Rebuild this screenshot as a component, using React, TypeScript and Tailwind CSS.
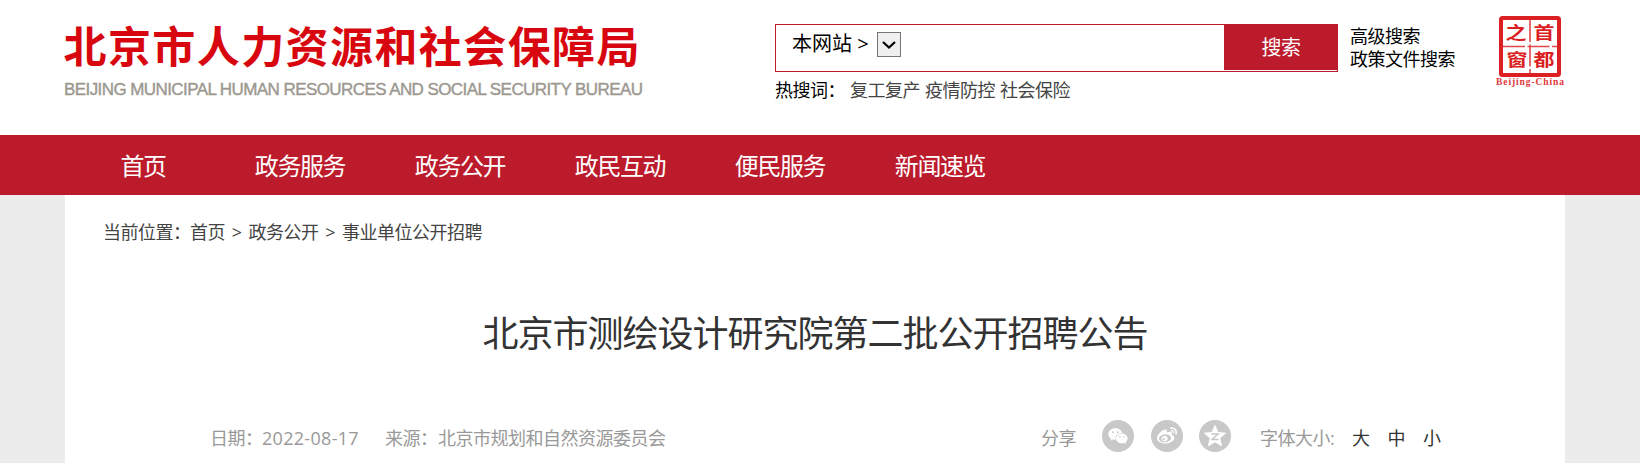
import React from "react";
import { FaWeibo } from "react-icons/fa";
import { AiFillWechat } from "react-icons/ai";

const navItems = ["政务服务", "政务公开", "政民互动", "便民服务", "新闻速览"];
const hotWords = ["复工复产", "疫情防控", "社会保险"];

const Logo = () => {
    return <svg width="590" height="100" viewBox="0 0 590 100" className="block overflow-visible">
        <text
            x="-1.5"
            y="55"
            textLength="576"
            lengthAdjust="spacing"
            fontSize="43"
            fontWeight="700"
            fill="#d8070f"
            fontFamily="'Noto Sans CJK SC', sans-serif"
        >
            北京市人力资源和社会保障局
        </text>
        <text
            x="-1"
            y="87"
            textLength="579"
            lengthAdjust="spacing"
            fontSize="17"
            fill="#9c9890"
            stroke="#9c9890"
            strokeWidth="0.4"
            fontFamily="'Liberation Sans', sans-serif"
        >
            BEIJING MUNICIPAL HUMAN RESOURCES AND SOCIAL SECURITY BUREAU
        </text>
    </svg>;
};

const CapitalSeal = () => {
    return <svg width="72" height="76" viewBox="0 0 72 76" className="block overflow-visible">
        <rect x="5" y="2" width="58" height="57" rx="1.5" fill="none" stroke="#dc1f22" strokeWidth="4" />
        <path d="M34 4v53M7 30.5h54" stroke="#e0494b" strokeWidth="1.6" strokeDasharray="22 2.5" />
        <g
            fill="#dc1f22"
            fontFamily="'Noto Sans CJK SC', sans-serif"
            fontWeight="700"
            fontSize="21"
            transform="scale(1 0.8)"
        >
            <text x="9.5" y="28.500">之</text>
            <text x="37.5" y="28.500">首</text>
            <text x="10.5" y="62.500">窗</text>
            <text x="37.5" y="62.500">都</text>
        </g>
        <text
            x="0"
            y="69"
            textLength="68"
            fontSize="9.5"
            fontWeight="700"
            fill="#e0383b"
            fontFamily="'Liberation Serif', serif"
        >
            Beijing-China
        </text>
    </svg>;
};

const SearchBox = () => {
    return <div className="w-[563px]">
        <div className="flex h-12 border border-[#bc1b2c]">
            <div className="flex flex-1 items-start pl-4 pt-2">
                <span className="w-[85px] whitespace-pre text-[20px] leading-[21px]">本网站 &gt;</span>
                <span className="mt-[-1px] flex h-[25px] w-6 items-center justify-center border border-[#767676] bg-[#efefef]">
                    <svg width="16" height="12" viewBox="0 0 16 12" fill="none" stroke="#000" strokeWidth="2.2">
                        <path d="M2 3l6 5.5L14 3" />
                    </svg>
                </span>
            </div>
            <div className="flex h-[45px] w-[113px] items-center justify-center bg-[#bc1b2c] pl-px pt-px text-[20px] tracking-[-0.5px] text-white">
                搜索
            </div>
        </div>
        <div className="mt-1.5 flex whitespace-nowrap text-[18px] leading-6 tracking-[-0.5px]">
            <span className="w-[75px]">热搜词：</span>
            <div className="flex gap-[5px] text-[#444]">
                {hotWords.map((word) => <a key={word}>{word}</a>)}
            </div>
        </div>
    </div>;
};

const ShareIcon = ({ children }: { children: React.ReactNode }) => {
    return <span className="flex size-8 items-center justify-center rounded-full bg-[#c8c8c8] text-white">
        {children}
    </span>;
};

const App = () => {
    return <div className="h-[463px] w-[1640px] overflow-hidden bg-[#ececec] font-['Open_Sans','Noto_Sans_CJK_SC',sans-serif] text-black">
        <header className="flex h-[135px] bg-white pl-[65px]">
            <div className="w-[710px] pt-2">
                <Logo />
            </div>
            <div className="pt-6">
                <SearchBox />
            </div>
            <div className="w-[158px] pl-3 pt-[25px] text-[18px] leading-[23px] tracking-[-0.5px]">
                <div>高级搜索</div>
                <div>政策文件搜索</div>
            </div>
            <div className="pt-4">
                <CapitalSeal />
            </div>
        </header>

        <nav className="flex h-[60px] items-center bg-[#bc1b2c] pl-[63px] text-[24px] tracking-[-1.4px] text-white">
            <a className="w-[157px] pl-[3px] pt-px text-center">首页</a>
            {navItems.map((item) => <a key={item} className="w-40 pt-px text-center">{item}</a>)}
        </nav>

        <main className="ml-[65px] h-[268px] w-[1500px] bg-white">
            <div className="flex whitespace-nowrap pl-[38px] pt-[25px] text-[18px] leading-6 tracking-[-0.5px] text-[#444]">
                <span className="w-[87px]">当前位置：</span>
                <span>首页</span>
                <span className="w-[23.5px] text-center">&gt;</span>
                <span>政务公开</span>
                <span className="w-[23.5px] text-center">&gt;</span>
                <span>事业单位公开招聘</span>
            </div>
            <h1 className="mt-[66px] text-center text-[36px] leading-[48px] tracking-[-1px] text-[#333]">
                北京市测绘设计研究院第二批公开招聘公告
            </h1>
            <div className="mt-[62px] flex h-8 items-center whitespace-nowrap text-[18px] leading-6 tracking-[-0.5px] text-[#999]">
                <div className="flex w-[976px] pl-[145px] pt-[3px]">
                    <span className="w-[52px]">日期：</span>
                    <span className="w-[123px] tracking-[0.3px]">2022-08-17</span>
                    <span className="w-[53px]">来源：</span>
                    <span>北京市规划和自然资源委员会</span>
                </div>
                <span className="w-[61px] pt-[3px]">分享</span>
                <div className="flex w-[158px] gap-[16.5px]">
                    <ShareIcon><AiFillWechat size={22} /></ShareIcon>
                    <ShareIcon><FaWeibo size={20} /></ShareIcon>
                    <ShareIcon>
                        <svg width="24" height="24" viewBox="0 0 24 24">
                            <path d="M12 1.5l3 7 7.5.7-5.7 5 1.8 7.6-6.6-4-6.6 4 1.8-7.6-5.7-5L9 8.5z" fill="#fff" stroke="#fff" strokeLinejoin="round" />
                            <path d="M8.5 10H15l-6 5.5h6.5" fill="none" stroke="#c8c8c8" strokeWidth="1.5" />
                        </svg>
                    </ShareIcon>
                </div>
                <span className="w-[92px] pt-[3px]">字体大小:</span>
                <div className="flex gap-[18px] pt-[3px] text-[#333]">
                    <a>大</a>
                    <a>中</a>
                    <a>小</a>
                </div>
            </div>
        </main>
    </div>;
};

export default App;
